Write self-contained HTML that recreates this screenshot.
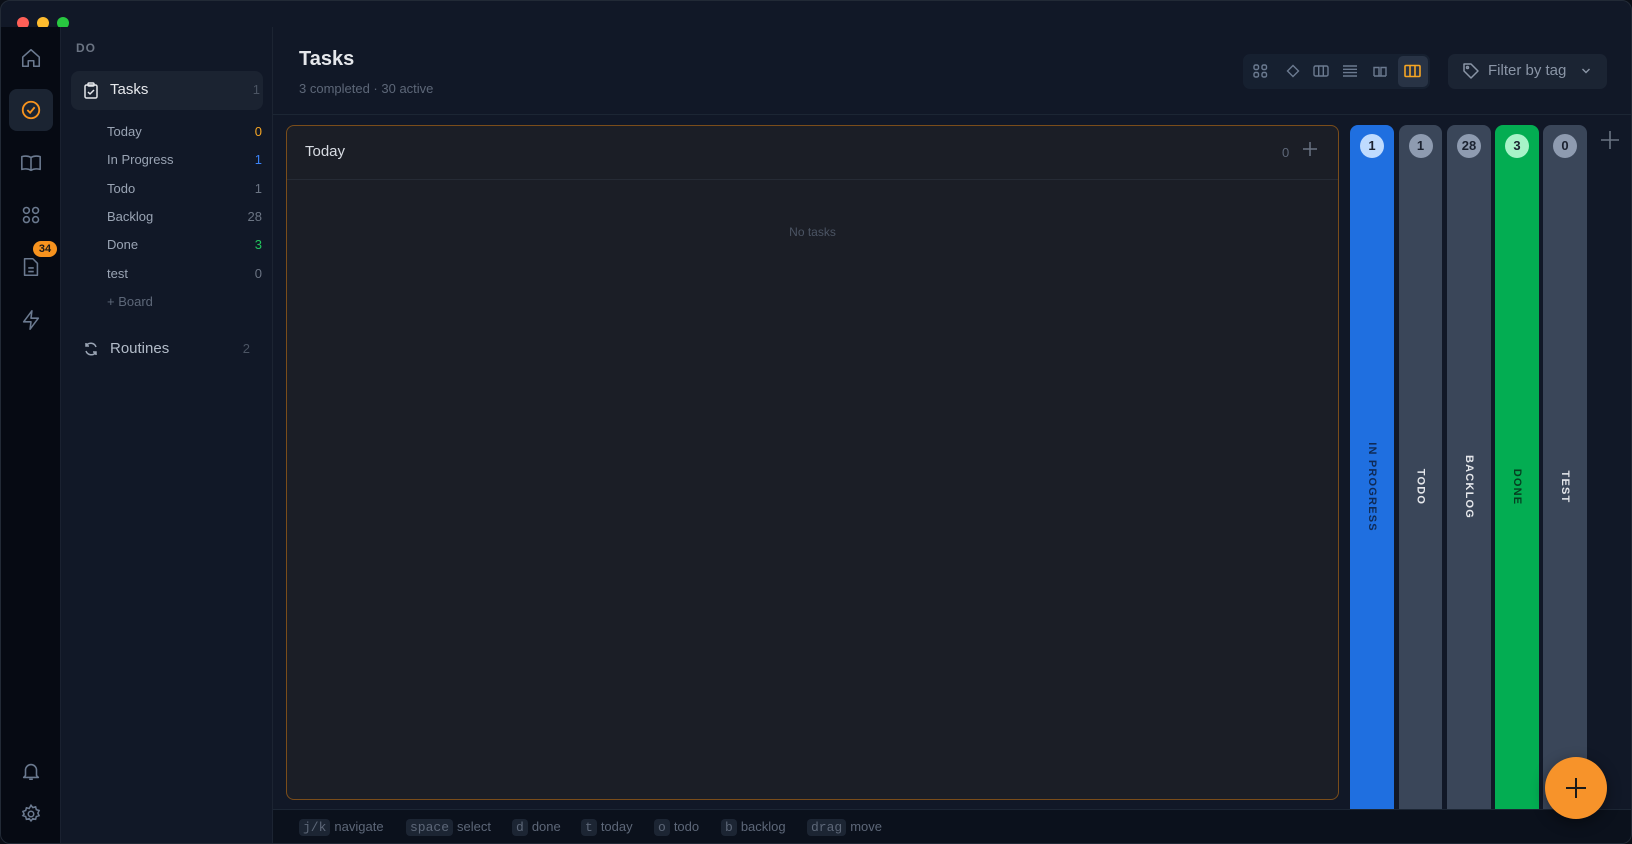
<!DOCTYPE html>
<html><head><meta charset="utf-8"><style>
*{box-sizing:border-box;margin:0;padding:0}
body{width:1632px;height:844px;background:#0b0f17;font-family:"Liberation Sans",sans-serif;overflow:hidden;position:relative}
.win{position:absolute;inset:0;background:#111827;border-radius:10px;border:1px solid #222a36;overflow:hidden}
.a{position:absolute}
.tl{position:absolute;top:16px;width:12px;height:12px;border-radius:50%}
.rail{position:absolute;left:0;top:26px;width:60px;bottom:0;background:#060a13;border-right:1px solid #1a2130}
.side{position:absolute;left:60px;top:26px;width:212px;bottom:0;background:#111827;border-right:1px solid #1c2432}
.ico{position:absolute;left:19px;width:22px;height:22px}
.si{position:absolute;left:46px;right:10px;font-size:13px;color:#9aa4b4;height:20px;line-height:20px}
.si span{position:absolute;right:0;color:#6b7483}
.lane{position:absolute;top:124px;height:684px;border-radius:8px 8px 0 0}
.lane .b{position:absolute;left:50%;top:9px;width:24px;height:24px;margin-left:-12px;border-radius:50%;font-size:13px;font-weight:bold;text-align:center;line-height:24px;color:#1b2230}
.lane .t{position:absolute;left:50%;top:362px;transform:translate(-50%,-50%);writing-mode:vertical-rl;font-size:11px;font-weight:bold;letter-spacing:1.2px}
.k{background:#1c2533;color:#5d6778;font-family:"Liberation Mono",monospace;padding:1px 4px;border-radius:4px;margin-right:4px}
.f{position:absolute;top:818px;font-size:13px;color:#5d6778}
</style></head><body>
<div class="win">
<div class="tl" style="left:16px;background:#fe5f57"></div>
<div class="tl" style="left:36px;background:#febc2e"></div>
<div class="tl" style="left:56px;background:#28c840"></div>

<div class="rail">
<svg class="ico" style="top:20px" viewBox="0 0 24 24" fill="none" stroke="#6b7a90" stroke-width="1.7" stroke-linejoin="round"><path d="M3 11 12 3l9 8v10h-6v-6h-6v6H3z"/></svg>
<div class="a" style="left:8px;top:62px;width:44px;height:42px;border-radius:8px;background:#1b2432"></div>
<svg class="ico" style="top:72px" viewBox="0 0 24 24" fill="none" stroke="#f7931e" stroke-width="2"><circle cx="12" cy="12" r="9"/><path d="M8 12l3 3 5-6"/></svg>
<svg class="ico" style="top:125px" viewBox="0 0 24 24" fill="none" stroke="#6b7a90" stroke-width="1.7" stroke-linejoin="round"><path d="M2 5c4-1 7-1 10 1 3-2 6-2 10-1v14c-4-1-7-1-10 1-3-2-6-2-10-1zM12 6v14"/></svg>
<svg class="ico" style="top:177px" viewBox="0 0 24 24" fill="none" stroke="#6b7a90" stroke-width="1.7"><circle cx="7" cy="7" r="3.2"/><circle cx="17" cy="7" r="3.2"/><circle cx="7" cy="17" r="3.2"/><circle cx="17" cy="17" r="3.2"/></svg>
<svg class="ico" style="top:229px" viewBox="0 0 24 24" fill="none" stroke="#6b7a90" stroke-width="1.7" stroke-linejoin="round"><path d="M5 3h9l5 5v13H5zM9 13h6M9 17h6"/></svg>
<div class="a" style="left:32px;top:214px;width:24px;height:16px;border-radius:8px;background:#f7931e;color:#1a1a1a;font-size:11px;font-weight:bold;text-align:center;line-height:16px">34</div>
<svg class="ico" style="top:282px" viewBox="0 0 24 24" fill="none" stroke="#6b7a90" stroke-width="1.7" stroke-linejoin="round"><path d="M13 2 4 14h8l-1 8 9-12h-8z"/></svg>
<svg class="ico" style="top:733px" viewBox="0 0 24 24" fill="none" stroke="#6b7a90" stroke-width="1.7" stroke-linejoin="round"><path d="M6 17V11a6 6 0 0 1 12 0v6l2 2H4zM10 21h4"/></svg>
<svg class="ico" style="top:776px" viewBox="0 0 24 24" fill="none" stroke="#6b7a90" stroke-width="1.7"><circle cx="12" cy="12" r="3"/><path d="M12 2.5l2 2.5 3-.8.8 3 3 1-1.3 2.8 1.3 2.8-3 1-.8 3-3-.8-2 2.5-2-2.5-3 .8-.8-3-3-1L4.5 12 3.2 9.2l3-1 .8-3 3 .8z"/></svg>
</div>

<div class="side">
<div class="a" style="left:15px;top:14px;font-size:12px;font-weight:bold;color:#6b7483;letter-spacing:1px">DO</div>
<div class="a" style="left:10px;top:44px;width:192px;height:39px;border-radius:8px;background:#1b2331"></div>
<svg class="a" style="left:22px;top:55px" width="16" height="17" viewBox="0 0 16 17" fill="none" stroke="#e5e7eb" stroke-width="1.5" stroke-linejoin="round"><rect x="2" y="3" width="12" height="13" rx="1.5"/><rect x="5" y="1" width="6" height="3" rx="1"/><path d="M5 10l2 2 4-4"/></svg>
<div class="a" style="left:49px;top:54px;font-size:15px;color:#e5e7eb">Tasks</div>
<div class="a" style="right:12px;top:55px;font-size:13px;color:#4b5463">1</div>
<div class="si" style="top:95px">Today<span style="color:#f5a524">0</span></div>
<div class="si" style="top:123px">In Progress<span style="color:#3b82f6">1</span></div>
<div class="si" style="top:152px">Todo<span>1</span></div>
<div class="si" style="top:180px">Backlog<span>28</span></div>
<div class="si" style="top:208px">Done<span style="color:#22c55e">3</span></div>
<div class="si" style="top:237px">test<span>0</span></div>
<div class="si" style="top:265px;color:#5d6778">+ Board</div>
<svg class="a" style="left:22px;top:314px" width="16" height="16" viewBox="0 0 16 16" fill="none" stroke="#9aa4b4" stroke-width="1.5"><path d="M13 6A5.5 5.5 0 0 0 3 5M3 2v3h3M3 10a5.5 5.5 0 0 0 10 1M13 14v-3h-3"/></svg>
<div class="a" style="left:49px;top:313px;font-size:15px;color:#b3bcc9">Routines</div>
<div class="a" style="right:22px;top:314px;font-size:13px;color:#4b5463">2</div>
</div>

<div class="a" style="left:272px;top:113px;right:0;height:1px;background:#1c2634"></div>
<div class="a" style="left:298px;top:47px;font-size:20px;font-weight:bold;color:#e5e7eb">Tasks</div>
<div class="a" style="left:298px;top:80px;font-size:13px;color:#5d6778">3 completed · 30 active</div>

<div class="a" style="left:1242px;top:53px;width:187px;height:35px;border-radius:7px;background:#162030"></div>
<div class="a" style="left:1397px;top:55px;width:30px;height:31px;border-radius:5px;background:#283345"></div>
<svg class="a" style="left:1252px;top:61px" width="170" height="18" viewBox="0 0 170 18" fill="none" stroke="#6b7a90" stroke-width="1.4">
<rect x="1" y="3" width="4.5" height="4.5" rx="1.5"/><rect x="9" y="3" width="4.5" height="4.5" rx="1.5"/><rect x="1" y="10.5" width="4.5" height="4.5" rx="1.5"/><rect x="9" y="10.5" width="4.5" height="4.5" rx="1.5"/>
<path d="M40 3.5 45.5 9 40 14.5 34.5 9z"/>
<rect x="61" y="4" width="14" height="10" rx="1.5"/><path d="M65.7 4v10M70.3 4v10"/>
<path d="M90 4h14M90 7.3h14M90 10.6h14M90 14h14"/>
<path d="M121 14V5.5h5V14M128 14V5.5h5V14M121 14h12"/>
<g stroke="#f5a524" stroke-width="1.6"><rect x="152" y="3.5" width="15" height="11" rx="1"/><path d="M157 3.5v11M162 3.5v11"/></g>
</svg>
<div class="a" style="left:1447px;top:53px;width:159px;height:35px;border-radius:7px;background:#1b2433"></div>
<svg class="a" style="left:1461px;top:61px" width="18" height="18" viewBox="0 0 18 18" fill="none" stroke="#8a95a6" stroke-width="1.5" stroke-linejoin="round"><path d="M2 2h7l7 7-7 7-7-7z"/><circle cx="5.5" cy="5.5" r="1"/></svg>
<div class="a" style="left:1487px;top:61px;font-size:15px;color:#8a95a6">Filter by tag</div>
<svg class="a" style="left:1580px;top:66px" width="10" height="8" viewBox="0 0 10 8" fill="none" stroke="#8a95a6" stroke-width="1.4"><path d="M1.5 2 5 5.5 8.5 2"/></svg>

<div class="a" style="left:285px;top:124px;width:1053px;height:675px;border:1px solid #7a4d1a;border-radius:8px;background:#1b1e26"></div>
<div class="a" style="left:286px;top:178px;width:1051px;height:1px;background:#262b35"></div>
<div class="a" style="left:304px;top:142px;font-size:15px;color:#d7dbe2">Today</div>
<div class="a" style="left:1281px;top:144px;font-size:13px;color:#5d6778">0</div>
<svg class="a" style="left:1302px;top:141px" width="14" height="14" viewBox="0 0 14 14" stroke="#6b7483" stroke-width="1.5"><path d="M7 0v14M0 7h14"/></svg>
<div class="a" style="left:286px;width:1051px;top:224px;text-align:center;font-size:12px;color:#4b5463">No tasks</div>

<div class="lane" style="left:1349px;width:44px;background:#1f6fe0"><div class="b" style="background:#bfdbfe">1</div><div class="t" style="color:#0f2a55">IN PROGRESS</div></div>
<div class="lane" style="left:1398px;width:43px;background:#3a4659"><div class="b" style="background:#8e9bb0">1</div><div class="t" style="color:#e5e7eb">TODO</div></div>
<div class="lane" style="left:1446px;width:44px;background:#3a4659"><div class="b" style="background:#8e9bb0">28</div><div class="t" style="color:#e5e7eb">BACKLOG</div></div>
<div class="lane" style="left:1494px;width:44px;background:#03ad52"><div class="b" style="background:#a7f3c8">3</div><div class="t" style="color:#063d20">DONE</div></div>
<div class="lane" style="left:1542px;width:44px;background:#3a4659"><div class="b" style="background:#8e9bb0">0</div><div class="t" style="color:#e5e7eb">TEST</div></div>
<svg class="a" style="left:1600px;top:130px" width="18" height="18" viewBox="0 0 18 18" stroke="#6b7483" stroke-width="1.6"><path d="M9 0v18M0 9h18"/></svg>

<div class="a" style="left:272px;top:808px;right:0;bottom:0;background:#0b111c;border-top:1px solid #1c2634"></div>
<div class="f" style="left:298px"><span class="k">j/k</span>navigate</div>
<div class="f" style="left:405px"><span class="k">space</span>select</div>
<div class="f" style="left:511px"><span class="k">d</span>done</div>
<div class="f" style="left:580px"><span class="k">t</span>today</div>
<div class="f" style="left:653px"><span class="k">o</span>todo</div>
<div class="f" style="left:720px"><span class="k">b</span>backlog</div>
<div class="f" style="left:806px"><span class="k">drag</span>move</div>

<div class="a" style="left:1544px;top:756px;width:62px;height:62px;border-radius:50%;background:#f7932a;box-shadow:0 4px 14px rgba(0,0,0,.4)"></div>
<svg class="a" style="left:1565px;top:777px" width="20" height="20" viewBox="0 0 20 20" stroke="#1a1a1a" stroke-width="2"><path d="M10 0v20M0 10h20"/></svg>
</div>
</body></html>
